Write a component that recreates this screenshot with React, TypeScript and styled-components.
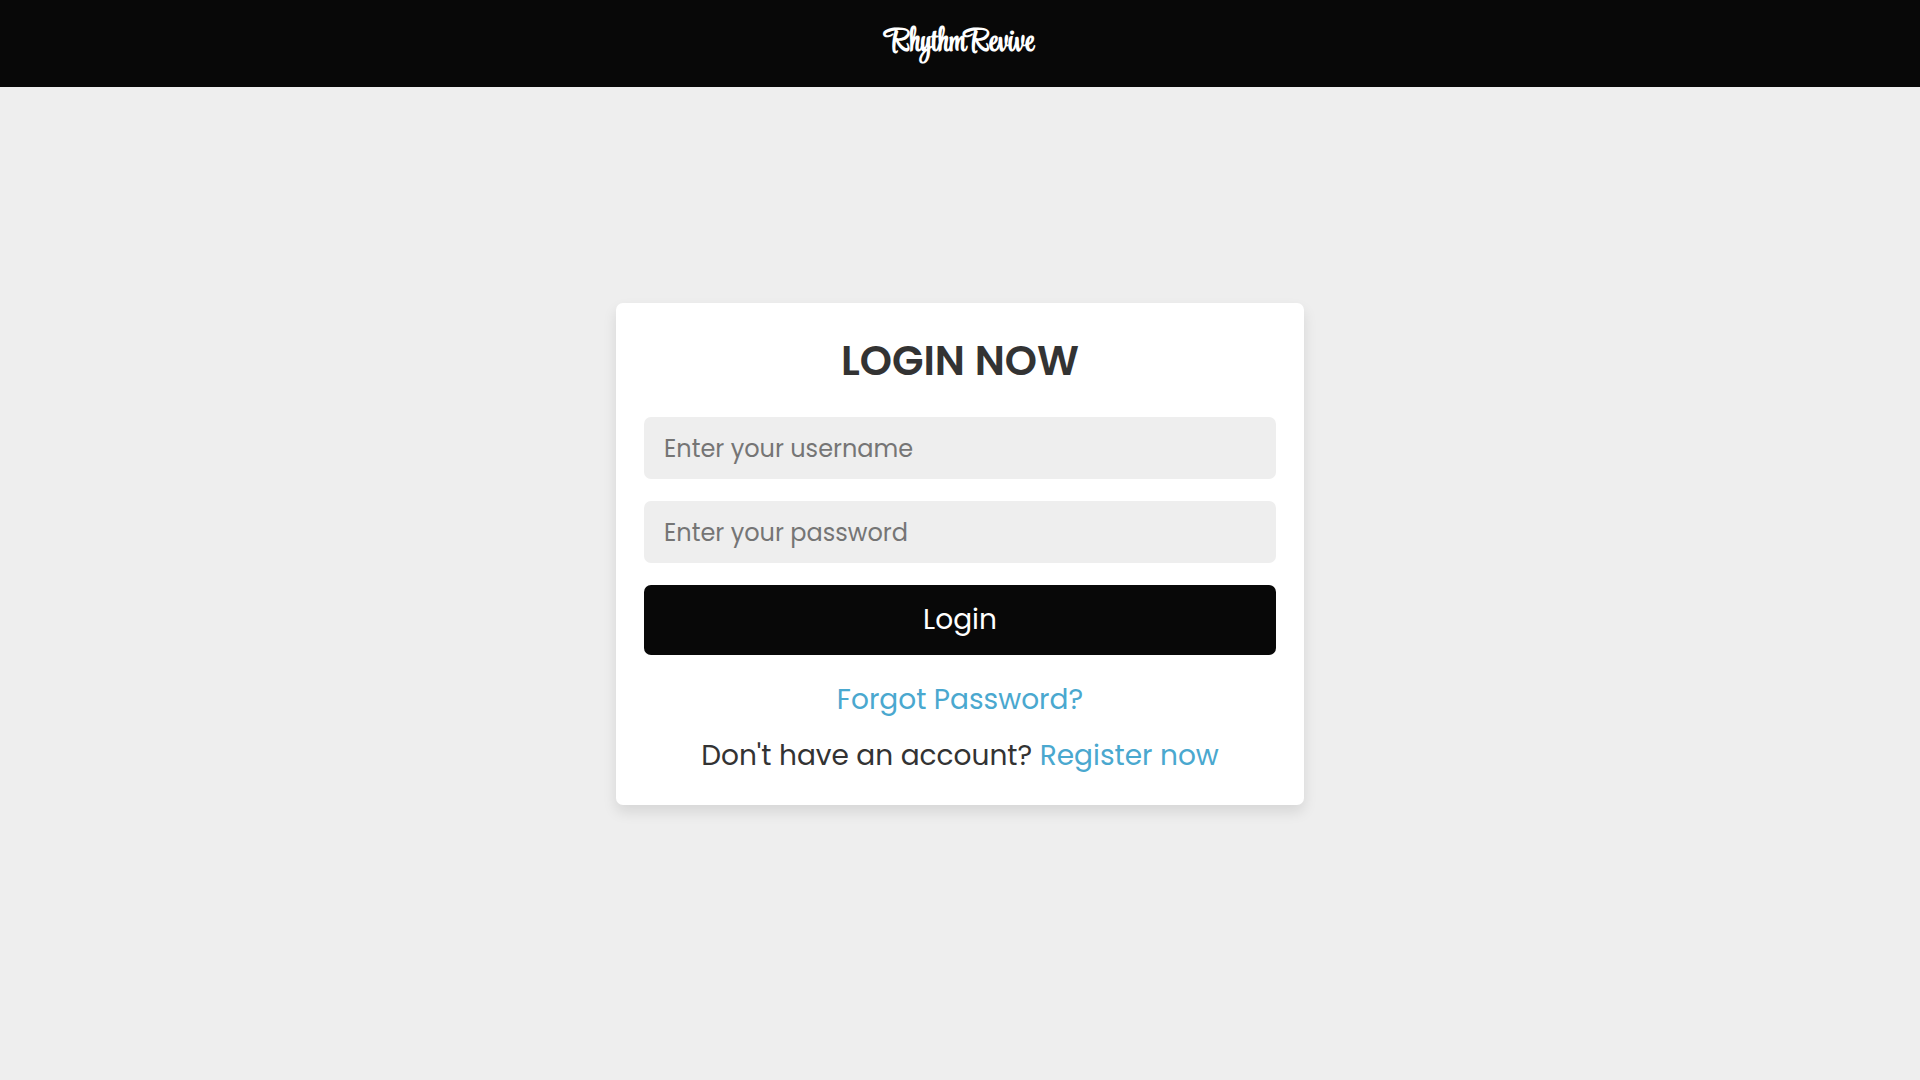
import React from "react";
import styled, { createGlobalStyle } from "styled-components";

const GlobalStyle = createGlobalStyle`
  *, *::before, *::after { box-sizing: border-box; }
  body {
    margin: 0;
    background: #eee;
    color: #333;
    font-family: Poppins, Inter, "Open Sans", sans-serif;
  }
`;

const Page = styled.div`
  min-height: 100vh;
  display: flex;
  flex-direction: column;
`;

const Header = styled.header`
  display: flex;
  justify-content: center;
  padding: 22px;
  background: #080808;
`;

const Logo = styled.a`
  color: #fff;
  font-family: "Style Script", "Oleo Script", "Liberation Serif", serif;
  font-size: 32px;
  font-weight: 700;
  line-height: 43px;
  text-decoration: none;
`;

const Main = styled.main`
  flex: 1;
  display: flex;
  align-items: center;
  justify-content: center;
  padding: 0 20px 59px;
`;

const Card = styled.form`
  width: 100%;
  max-width: 688px;
  display: flex;
  flex-direction: column;
  padding: 28px;
  border-radius: 7px;
  background: #fff;
  box-shadow: 0 7px 14px rgba(0, 0, 0, 0.1);
  text-align: center;
`;

const Title = styled.h1`
  margin: 0 0 26px;
  font-size: 41px;
  font-weight: 600;
  line-height: 60px;
  text-transform: uppercase;
`;

const Field = styled.input`
  width: 100%;
  height: 62px;
  margin-bottom: 22px;
  padding: 0 20px;
  border: 0;
  border-radius: 7px;
  background: #eee;
  color: #333;
  font-family: inherit;
  font-size: 24px;

  &::placeholder {
    color: #757575;
    opacity: 1;
  }
`;

const Submit = styled.button`
  height: 70px;
  margin-bottom: 24px;
  border: 0;
  border-radius: 7px;
  background: #080808;
  color: #fff;
  font-family: inherit;
  font-size: 28px;
  font-weight: 400;
  cursor: pointer;
`;

const Links = styled.div`
  display: flex;
  flex-direction: column;
  gap: 14px;
  font-size: 28px;
  line-height: 42px;
`;

const Note = styled.p`
  margin: 0;
`;

const TextLink = styled.a`
  color: #4aa8cf;
  text-decoration: none;
`;

export default function App() {
  return (
    <Page>
      <GlobalStyle />
      <Header>
        <Logo href="#">RhythmRevive</Logo>
      </Header>
      <Main>
        <Card onSubmit={(event: React.FormEvent) => event.preventDefault()}>
          <Title>Login now</Title>
          <Field type="text" name="username" aria-label="Username" placeholder="Enter your username" />
          <Field type="password" name="password" aria-label="Password" placeholder="Enter your password" />
          <Submit type="submit">Login</Submit>
          <Links>
            <Note>
              <TextLink href="#forgot">Forgot Password?</TextLink>
            </Note>
            <Note>
              Don't have an account? <TextLink href="#register">Register now</TextLink>
            </Note>
          </Links>
        </Card>
      </Main>
    </Page>
  );
}
